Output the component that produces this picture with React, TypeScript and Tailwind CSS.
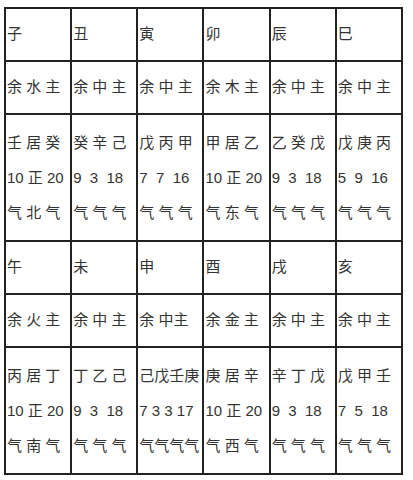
const GROUPS = [
  {
    names: ["子", "丑", "寅", "卯", "辰", "巳"],
    mains: ["余 水 主", "余 中 主", "余 中 主", "余 木 主", "余 中 主", "余 中 主"],
    details: [
      ["壬 居 癸", "10 正 20", "气 北 气"],
      ["癸 辛 己", "9  3  18", "气 气 气"],
      ["戊 丙 甲", "7  7  16", "气 气 气"],
      ["甲 居 乙", "10 正 20", "气 东 气"],
      ["乙 癸 戊", "9  3  18", "气 气 气"],
      ["戊 庚 丙", "5  9  16", "气 气 气"],
    ],
  },
  {
    names: ["午", "未", "申", "酉", "戌", "亥"],
    mains: ["余 火 主", "余 中 主", "余 中主", "余 金 主", "余 中 主", "余 中 主"],
    details: [
      ["丙 居 丁", "10 正 20", "气 南 气"],
      ["丁 乙 己", "9  3  18", "气 气 气"],
      ["己戊壬庚", "7 3 3 17", "气气气气"],
      ["庚 居 辛", "10 正 20", "气 西 气"],
      ["辛 丁 戊", "9  3  18", "气 气 气"],
      ["戊 甲 壬", "7  5  18", "气 气 气"],
    ],
  },
];

const cell = "border-2 border-[#222] px-[1px] align-middle text-left";

export default function App() {
  return (
    <div
      className="w-[413px] h-[480px] bg-white pl-[4px] pt-[7px] text-[15px] text-[#333]"
      style={{ fontFamily: '"Liberation Sans", "Noto Sans CJK SC", sans-serif' }}
    >
      <table className="table-fixed border-collapse w-[399px]">
        <tbody>
          {GROUPS.map((g, gi) => (
            <>
              <tr key={`n${gi}`} className="h-[53px]">
                {g.names.map((n) => (
                  <td key={n} className={cell}>
                    {n}
                  </td>
                ))}
              </tr>
              <tr key={`m${gi}`} className="h-[53px]">
                {g.mains.map((m, i) => (
                  <td key={i} className={`${cell} whitespace-pre`}>
                    {m}
                  </td>
                ))}
              </tr>
              <tr key={`d${gi}`} className="h-[127px]">
                {g.details.map((d, i) => (
                  <td key={i} className={`${cell} whitespace-pre leading-[35px]`}>
                    {d.map((line, li) => (
                      <div key={li}>{line}</div>
                    ))}
                  </td>
                ))}
              </tr>
            </>
          ))}
        </tbody>
      </table>
    </div>
  );
}
